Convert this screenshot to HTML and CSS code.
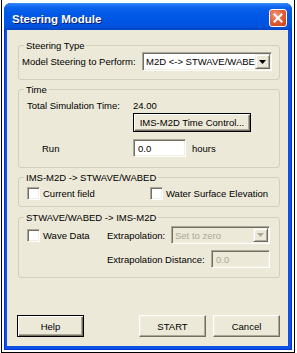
FILE: index.html
```html
<!DOCTYPE html>
<html>
<head>
<meta charset="utf-8">
<title>Steering Module</title>
<link rel="stylesheet" href="styles.css">
</head>
<body>
<div class="shot">
  <div class="window">
    <div class="titlebar">
      <span class="title">Steering Module</span>
      <span class="close"><svg width="16" height="16" viewBox="0 0 16 16"><path d="M4.5 4.5 L11.5 11.5 M11.5 4.5 L4.5 11.5" stroke="#fff" stroke-width="2" stroke-linecap="square" fill="none"/></svg></span>
    </div>
    <div class="client">
      <fieldset class="group">
        <legend>Steering Type</legend>
        <div class="steer">
          <span>Model Steering to Perform:</span>
          <div class="combo sunken c1">
            <span class="ctext">M2D &lt;-&gt; STWAVE/WABED</span>
            <span class="arrow raised"><svg width="7" height="4" viewBox="0 0 7 4"><path d="M0 0 H7 L3.5 4 Z" fill="#000"/></svg></span>
          </div>
        </div>
      </fieldset>

      <fieldset class="group g2">
        <legend>Time</legend>
        <div class="time">
          <div class="trow"><span class="tlabel">Total Simulation Time:</span><span>24.00</span></div>
          <div class="trow tbtn"><span class="tlabel"></span><button class="btn default tc">IMS-M2D Time Control...</button></div>
          <div class="trow trun"><span class="tlabel run">Run</span><span class="field sunken f1">0.0</span><span class="hours">hours</span></div>
        </div>
      </fieldset>

      <fieldset class="group g3">
        <legend>IMS-M2D -&gt; STWAVE/WABED</legend>
        <div class="checks">
          <label class="chk first"><span class="box sunken"></span><span>Current field</span></label>
          <label class="chk"><span class="box sunken"></span><span>Water Surface Elevation</span></label>
        </div>
      </fieldset>

      <fieldset class="group g4">
        <legend>STWAVE/WABED -&gt; IMS-M2D</legend>
        <div class="wave">
          <label class="chk"><span class="box sunken"></span><span>Wave Data</span></label>
          <div class="pair">
            <span>Extrapolation:</span>
            <div class="combo sunken c2 disabled">
              <span class="ctext">Set to zero</span>
              <span class="arrow raised"><svg width="7" height="4" viewBox="0 0 7 4"><path d="M0 0 H7 L3.5 4 Z" fill="#ACA899"/></svg></span>
            </div>
          </div>
          <span></span>
          <div class="pair">
            <span>Extrapolation Distance:</span>
            <span class="field sunken f2 disabled">0.0</span>
          </div>
        </div>
      </fieldset>

      <div class="buttons">
        <button class="btn default">Help</button>
        <button class="btn start">START</button>
        <button class="btn cancel">Cancel</button>
      </div>
    </div>
  </div>
</div>
</body>
</html>
```

FILE: styles.css
```css
* { box-sizing: border-box; }

body {
  margin: 0;
  background: #fff;
  font-family: "Liberation Sans", Arial, sans-serif;
  font-size: 9.5px;
  color: #000;
}

.shot {
  margin-left: 1px;
  width: 294px;
  height: 353px;
  border: 1px solid #000;
  border-top: 0;
  padding: 3px 2px 0 2px;
}

.window {
  width: 288px;
  height: 347px;
  display: flex;
  flex-direction: column;
  background: #0A52E6;
  border-radius: 7px 7px 0 0;
  box-shadow: inset 1px 0 #0831D9, inset -1px 0 #0831D9, inset 0 -1px #0831D9;
}

.titlebar {
  height: 27px;
  flex: none;
  display: flex;
  align-items: flex-start;
  padding: 0 5px 0 8px;
  border-radius: 7px 7px 0 0;
  background: linear-gradient(to bottom,
    #3D8EF8 0px, #1E76F5 2px, #0A62EC 5px, #0058E6 11px,
    #0056E4 19px, #0050DA 24px, #0044C4 27px);
}

.title {
  margin-top: 9px;
  line-height: 14px;
  font-size: 11.5px;
  font-weight: bold;
  color: #fff;
  text-shadow: 1px 1px #0A1C6E;
}

.close {
  margin-left: auto;
  margin-top: 6px;
  width: 18px;
  height: 18px;
  border: 1px solid #fff;
  border-radius: 3px;
  background: radial-gradient(circle at 35% 30%, #F09A7E 0%, #E2623C 45%, #C53E18 100%);
  display: flex;
  align-items: center;
  justify-content: center;
}

.client {
  flex: 1;
  margin: 0 4px 4px 3px;
  background: #ECE9D8;
  display: flex;
  flex-direction: column;
  padding: 9px 8px 9px 11px;
}

.group {
  margin: 0;
  padding: 0;
  min-width: 0;
  border: 1px solid #D0D0BF;
  border-radius: 3px;
}

.group legend {
  margin-left: 5px;
  padding: 0 2px;
  line-height: 13px;
}

.g2 { margin-top: 3px; }
.g3 { margin-top: 3px; }
.g4 { margin-top: 4px; }

.sunken {
  border: 1px solid;
  border-color: #ACA899 #fff #fff #ACA899;
  box-shadow: inset 1px 1px #716F64, inset -1px -1px #F1EFE2;
  background: #fff;
}

.raised {
  border: 1px solid;
  border-color: #F1EFE2 #716F64 #716F64 #F1EFE2;
  box-shadow: inset 1px 1px #fff, inset -1px -1px #ACA899;
  background: #ECE9D8;
}

/* Steering type */
.steer {
  display: flex;
  align-items: center;
  height: 27px;
  padding: 0 7px 8px 3px;
}

.combo {
  display: flex;
  align-items: stretch;
  padding: 1px;
  overflow: hidden;
}

.c1 {
  margin-left: auto;
  width: 130px;
  height: 19px;
}

.ctext {
  flex: 1;
  min-width: 0;
  overflow: hidden;
  white-space: nowrap;
  padding-left: 2px;
  display: flex;
  align-items: center;
}

.arrow {
  flex: none;
  width: 15px;
  display: flex;
  align-items: center;
  justify-content: center;
}

/* Time */
.time {
  padding: 3px 8px 10px 8px;
}

.trow {
  display: flex;
  align-items: center;
  height: 12px;
}

.tlabel {
  width: 106px;
  flex: none;
}

.run { padding-left: 15px; }

.tbtn { height: 19px; margin-top: 2px; }
.trun { height: 18px; margin-top: 7px; }

.field {
  display: flex;
  align-items: center;
  height: 18px;
  padding-left: 4px;
}

.f1 { width: 53px; }
.hours { margin-left: 6px; }

/* Buttons */
.btn {
  appearance: none;
  font: inherit;
  color: #000;
  margin: 0;
  padding: 0;
  border: 1px solid;
  border-color: #fff #716F64 #716F64 #fff;
  box-shadow: inset -1px -1px #ACA899, inset 1px 1px #F1EFE2;
  background: #ECE9D8;
  width: 67px;
  height: 22px;
  text-align: center;
}

.btn.default {
  border-color: #000;
  box-shadow: inset 1px 1px #fff, inset -1px -1px #716F64, inset -2px -2px #ACA899;
}

.tc {
  width: 118px;
  height: 19px;
}

/* Checkboxes */
.checks {
  display: flex;
  align-items: center;
  height: 22px;
  padding: 3px 8px 6px 8px;
}

.chk {
  display: flex;
  align-items: center;
  gap: 3px;
}

.chk.first { width: 123px; flex: none; }

.box {
  width: 13px;
  height: 13px;
  flex: none;
}

/* Wave */
.wave {
  display: grid;
  grid-template-columns: 80px 1fr;
  grid-template-rows: 18px 18px;
  row-gap: 6px;
  align-items: center;
  padding: 2px 9px 9px 8px;
}

.pair {
  display: flex;
  align-items: center;
  justify-content: space-between;
  height: 18px;
}

.c2 {
  width: 99px;
  height: 18px;
}

.f2 { width: 59px; }

.disabled {
  background: #ECE9D8;
  color: #ACA899;
}

.buttons {
  margin-top: auto;
  margin-left: -1px;
  display: flex;
}

.start { margin-left: auto; }
.cancel { margin-left: 7px; }
```
